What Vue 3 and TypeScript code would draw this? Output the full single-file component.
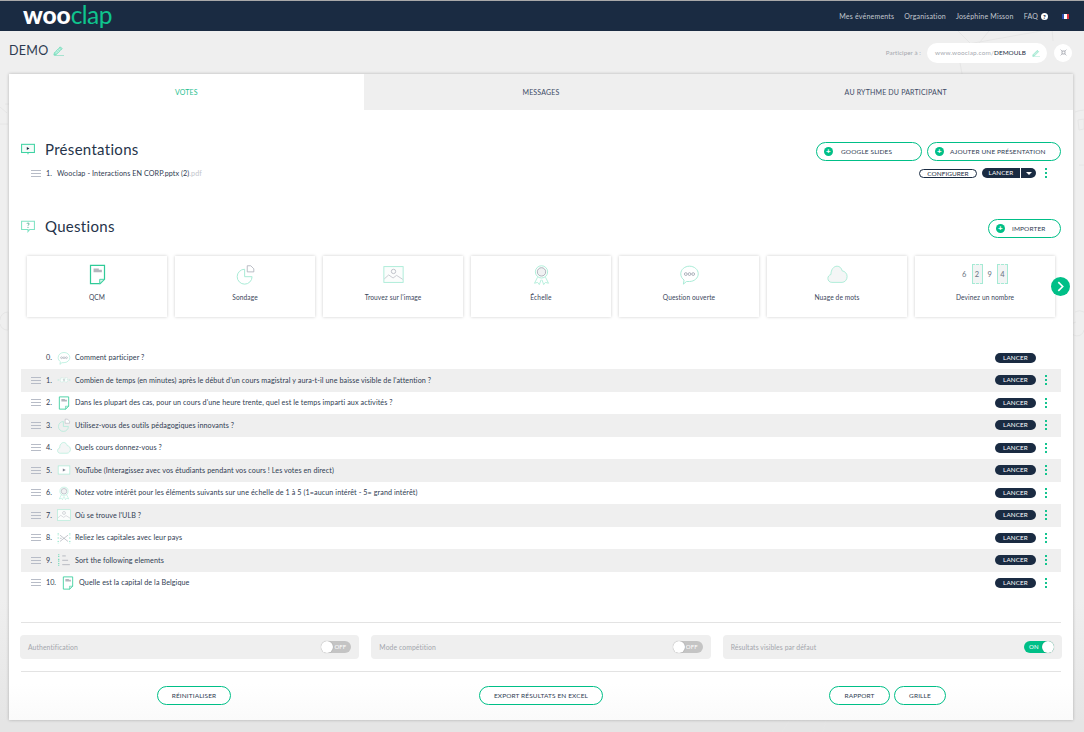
<script setup lang="ts">
interface Q { n: number; icon: string; text: string; drag: boolean }
const types = [
  { icon: 'qcm', label: 'QCM' },
  { icon: 'pie', label: 'Sondage' },
  { icon: 'image', label: 'Trouvez sur l\'image' },
  { icon: 'scale', label: 'Échelle' },
  { icon: 'open', label: 'Question ouverte' },
  { icon: 'cloud', label: 'Nuage de mots' },
]
const questions: Q[] = [
  { n: 0, icon: 'open', text: 'Comment participer ?', drag: false },
  { n: 1, icon: 'dash', text: 'Combien de temps (en minutes) après le début d\'un cours magistral y aura-t-il une baisse visible de l\'attention ?', drag: true },
  { n: 2, icon: 'qcm', text: 'Dans les plupart des cas, pour un cours d\'une heure trente, quel est le temps imparti aux activités ?', drag: true },
  { n: 3, icon: 'pie', text: 'Utilisez-vous des outils pédagogiques innovants ?', drag: true },
  { n: 4, icon: 'cloud', text: 'Quels cours donnez-vous ?', drag: true },
  { n: 5, icon: 'video', text: 'YouTube (Interagissez avec vos étudiants pendant vos cours ! Les votes en direct)', drag: true },
  { n: 6, icon: 'scale', text: 'Notez votre intérêt pour les éléments suivants sur une échelle de 1 à 5 (1=aucun intérêt - 5= grand intérêt)', drag: true },
  { n: 7, icon: 'image', text: 'Où se trouve l\'ULB ?', drag: true },
  { n: 8, icon: 'match', text: 'Reliez les capitales avec leur pays', drag: true },
  { n: 9, icon: 'sort', text: 'Sort the following elements', drag: true },
  { n: 10, icon: 'qcm', text: 'Quelle est la capital de la Belgique', drag: true },
]
const settings = [
  { label: 'Authentification', on: false },
  { label: 'Mode compétition', on: false },
  { label: 'Résultats visibles par défaut', on: true },
]
</script>

<template>
  <div class="page">
    <svg class="sprite" width="0" height="0">
      <symbol id="i-qcm" viewBox="0 0 24 24">
        <path d="M4 1.500h16v16l-5 5H4z" fill="#fff" stroke="#2fcb98" stroke-width="1.400" />
        <path d="M14.500 22.500v-5H20z" fill="#d8f5ea" stroke="#3fcf9f" stroke-width="1" />
        <path d="M7.500 5h6v1.500h3.500v3H7.500z" fill="#b3b6bd" />
      </symbol>
      <symbol id="i-pie" viewBox="0 0 24 24">
        <path d="M11 6a8.500 8.500 0 1 0 8.500 8.500H11z" fill="none" stroke="#a5ead4" stroke-width="1.100" />
        <path d="M14 2h4l3.500 3.500V9H14z" fill="#fff" stroke="#a8acb6" stroke-width="0.900" />
      </symbol>
      <symbol id="i-image" viewBox="0 0 24 24">
        <rect x="1" y="3" width="22" height="18" fill="#fbfdfc" stroke="#a5ead4" stroke-width="1" />
        <circle cx="12" cy="8.500" r="2.500" fill="none" stroke="#a8acb6" stroke-width="0.800" />
        <path d="M1.500 17l5-4.500 5 3.500 4-3 7 4.500" fill="none" stroke="#b5b8c0" stroke-width="0.800" />
      </symbol>
      <symbol id="i-scale" viewBox="0 0 24 24">
        <circle cx="12" cy="9" r="7" fill="none" stroke="#a5ead4" stroke-width="1" />
        <circle cx="12" cy="9" r="4.800" fill="#f0f1f2" stroke="#8f95a1" stroke-width="0.800" />
        <path d="M7.500 15L4 22l3.500-1 2 2.500L11.500 18M16.500 15l3.500 7-3.500-1-2 2.500L12.500 18" fill="none" stroke="#a5ead4" stroke-width="0.900" />
      </symbol>
      <symbol id="i-open" viewBox="0 0 24 24">
        <path d="M12 2.500c5.500 0 10 3.900 10 8.700s-4.500 8.800-10 8.800H8.500L5 23l.8-4.700C3.500 16.800 2 14.300 2 11.200 2 6.400 6.500 2.500 12 2.500z" fill="#fff" stroke="#a5ead4" stroke-width="1.100" />
        <circle cx="7.800" cy="11.500" r="1.600" fill="none" stroke="#7f8694" stroke-width="0.700" />
        <circle cx="12" cy="11.500" r="1.600" fill="none" stroke="#7f8694" stroke-width="0.700" />
        <circle cx="16.200" cy="11.500" r="1.600" fill="none" stroke="#7f8694" stroke-width="0.700" />
      </symbol>
      <symbol id="i-cloud" viewBox="0 0 24 24">
        <path d="M5.500 21C2.900 21 1 19 1 16.500c0-2.300 1.500-4 3.500-4.500C4.500 6.500 7.500 2.500 11.500 2.500c3 0 5.200 2.200 5.800 5.300 3 .4 5.700 3 5.700 6.500 0 3.700-2.600 6.700-5.800 6.700z" fill="#f4f6f6" stroke="#a5ead4" stroke-width="1" />
      </symbol>
      <symbol id="i-video" viewBox="0 0 24 24">
        <rect x="2" y="5" width="20" height="14" fill="#fff" stroke="#a5ead4" stroke-width="1.100" />
        <path d="M10 9.500l5 2.500-5 2.500z" fill="#7f8694" />
      </symbol>
      <symbol id="i-dash" viewBox="0 0 24 24">
        <path d="M1 12h3M20 12h3" stroke="#a5ead4" stroke-width="1.200" fill="none" />
        <rect x="6.500" y="8.500" width="4" height="7" fill="#fff" stroke="#a5ead4" stroke-width="0.900" stroke-dasharray="1.500 1.500" />
        <rect x="13.500" y="8.500" width="4" height="7" fill="#fff" stroke="#a5ead4" stroke-width="0.900" stroke-dasharray="1.500 1.500" />
        <path d="M10.500 12h3" stroke="#9298a5" stroke-width="0.900" />
      </symbol>
      <symbol id="i-match" viewBox="0 0 24 24">
        <path d="M2 4v4M2 11v3M2 17v4M22 4v4M22 11v3M22 17v4" stroke="#5fd8b1" stroke-width="1.400" fill="none" stroke-dasharray="2 1.500" />
        <path d="M5 7l14 11M5 18L19 7M5 12.500h3" stroke="#8f95a1" stroke-width="0.900" fill="none" />
      </symbol>
      <symbol id="i-sort" viewBox="0 0 24 24">
        <path d="M3 2v6M3 10v5M3 17v5" stroke="#5fd8b1" stroke-width="1.800" fill="none" stroke-dasharray="2 1" />
        <path d="M9 5h6M9 12.500h10M9 20h13" stroke="#8f95a1" stroke-width="1" fill="none" />
      </symbol>
      <symbol id="i-present" viewBox="0 0 24 24">
        <rect x="1" y="4" width="22" height="14" fill="#f4fcf9" stroke="#3fd3a3" stroke-width="1.800" />
        <path d="M10 8.500l4.500 2.500-4.500 2.500z" fill="#1a2b42" />
        <path d="M12 18v3" stroke="#3fd3a3" stroke-width="1.800" />
      </symbol>
      <symbol id="i-ask" viewBox="0 0 24 24">
        <path d="M1 4h22v14H15l-3 3.500V18H1z" fill="#fff" stroke="#7fe3c3" stroke-width="1.800" />
        <path d="M10 8c.5-1.500 4-1.500 4 .5 0 1.500-2 1.500-2 3" stroke="#1a8f70" stroke-width="1.200" fill="none" />
        <circle cx="12" cy="14" r=".9" fill="#1a8f70" />
      </symbol>
      <symbol id="i-pencil" viewBox="0 0 24 24">
        <path d="M3 17L16 4l4 4L7 21l-5 1z" fill="#a5ead4" stroke="#5fd8b1" stroke-width="1.500" />
        <path d="M6 14l4 4M9 11l4 4M12 8l4 4" stroke="#fff" stroke-width="1" />
        <path d="M3 23.500h21" stroke="#5fd8b1" stroke-width="1.500" />
      </symbol>
    </svg>

    <svg class="doodles" width="1084" height="732" viewBox="0 0 1084 732" fill="none" stroke="#e6e6e6" stroke-width="1">
      <path d="M958 31l17 17 14-17M962 74l-5-28 95-17 1 12" />
      <path d="M1075 112a26 26 0 0 1 9-2M1078 120l6-1v10l-5 1zM1079 165h5" />
      <path d="M0 107l7 6M0 124h8M5 104h4" />
      <path d="M0 320a8 8 0 0 1 8-8v18a8 8 0 0 1-8-6" />
      <path d="M1075 312a9 9 0 0 1 9 0M1076 322a7 7 0 1 0 8 8" />
      <path d="M765 720c2 6 6 9 9 12M790 720l-8 12M806 720a8 8 0 1 0 14 0M826 720l-3 12" />
    </svg>

    <header class="topbar">
      <div class="logo"><b>woo</b><span>clap</span></div>
      <nav class="nav">
        <a>Mes événements</a>
        <a>Organisation</a>
        <a>Joséphine Misson</a>
        <a class="faq">FAQ <i class="help">?</i></a>
        <span class="flag"><i class="fb"></i><i class="fw"></i><i class="fr"></i></span>
      </nav>
    </header>

    <div class="subbar">
      <h1 class="demo">DEMO</h1>
      <svg class="pencil-demo"><use href="#i-pencil" /></svg>
      <div class="join">
        <span class="join-label">Participer à :</span>
        <div class="join-pill">
          <span class="url">www.wooclap.com/</span><b class="code">DEMOULB</b>
          <svg class="pencil-url"><use href="#i-pencil" /></svg>
        </div>
        <div class="join-round">
          <svg viewBox="0 0 12 12" width="7" height="7" fill="none" stroke="#a9adb5" stroke-width="1.300"><path d="M1 1l3.500 3.500M11 1L7.500 4.500M1 11l3.500-3.500M11 11L7.500 7.500M2 5h3V2M10 5H7V2M2 7h3v3M10 7H7v3" /></svg>
        </div>
      </div>
    </div>

    <main class="card">
      <div class="tabs">
        <div class="tab active">VOTES</div>
        <div class="tab">MESSAGES</div>
        <div class="tab">AU RYTHME DU PARTICIPANT</div>
      </div>

      <section class="head first">
        <svg class="head-icon"><use href="#i-present" /></svg>
        <h2>Présentations</h2>
        <div class="head-actions">
          <button class="outline add slides"><i class="plus">+</i><span>GOOGLE SLIDES</span></button>
          <button class="outline add new"><i class="plus">+</i><span>AJOUTER UNE PRÉSENTATION</span></button>
        </div>
      </section>

      <div class="pres-row">
        <span class="handle"><i></i><i></i><i></i></span>
        <span class="num">1.</span>
        <span class="qtext pres">Wooclap - Interactions EN CORP.pptx (2)<em>.pdf</em></span>
        <button class="configure">CONFIGURER</button>
        <span class="split"><button class="launch left">LANCER</button><button class="launch caret"><i></i></button></span>
        <span class="dots-slot"><span class="dots"><i></i><i></i><i></i></span></span>
      </div>

      <section class="head second">
        <svg class="head-icon"><use href="#i-ask" /></svg>
        <h2>Questions</h2>
        <div class="head-actions">
          <button class="outline add imp"><i class="plus">+</i><span>IMPORTER</span></button>
        </div>
      </section>

      <div class="types">
        <div v-for="t in types" :key="t.label" class="type">
          <svg class="type-icon"><use :href="'#i-' + t.icon" /></svg>
          <span>{{ t.label }}</span>
        </div>
        <div class="type">
          <div class="digits">
            <span>6</span><span class="box">2</span><span>9</span><span class="box">4</span>
          </div>
          <span>Devinez un nombre</span>
        </div>
        <div class="next">
          <svg viewBox="0 0 10 10" width="11" height="11" fill="none" stroke="#fff" stroke-width="1.500"><path d="M3 1l4 4-4 4" /></svg>
        </div>
      </div>

      <div class="list">
        <div v-for="q in questions" :key="q.n" class="row">
          <span class="handle" :class="{ ghost: !q.drag }"><i></i><i></i><i></i></span>
          <span class="num">{{ q.n }}.</span>
          <svg class="row-icon"><use :href="'#i-' + q.icon" /></svg>
          <span class="qtext">{{ q.text }}</span>
          <button class="launch solo">LANCER</button>
          <span class="dots-slot"><span v-if="q.drag" class="dots"><i></i><i></i><i></i></span></span>
        </div>
      </div>

      <hr class="sep sep-a" />
      <div class="settings">
        <div v-for="s in settings" :key="s.label" class="setting">
          <span>{{ s.label }}</span>
          <span class="toggle" :class="{ on: s.on }">
            <i class="knob"></i><em>{{ s.on ? 'ON' : 'OFF' }}</em>
          </span>
        </div>
      </div>
      <hr class="sep sep-b" />

      <div class="footer">
        <button class="outline f1">RÉINITIALISER</button>
        <button class="outline f2">EXPORT RÉSULTATS EN EXCEL</button>
        <button class="outline f3">RAPPORT</button>
        <button class="outline f4">GRILLE</button>
      </div>
    </main>
  </div>
</template>

<style>
html, body { margin: 0; background: #efefef; overflow: hidden; }
</style>

<style scoped>
.page {
  position: relative;
  width: 1084px;
  height: 732px;
  overflow: hidden;
  background: linear-gradient(#efefef 0, #efefef 600px, #e5e5e5 722px);
  font-family: Lato, "Open Sans", sans-serif;
  color: #1a2b42;
}
.sprite { position: absolute; }
.doodles { position: absolute; left: 0; top: 0; }
button { font-family: inherit; padding: 0; cursor: pointer; }

.topbar {
  position: relative;
  height: 30px;
  border-top: 1px solid #a9a9a9;
  background: #1a2b42;
  display: flex;
  align-items: center;
  padding: 0 15px 0 23px;
}
.logo { font-size: 24.500px; line-height: 30px; margin-top: -2px; }
.logo b { color: #fff; font-weight: 900; letter-spacing: -.1px; }
.logo span { color: #0fc48e; font-weight: 400; letter-spacing: -.5px; }
.nav {
  margin-left: auto;
  display: flex;
  align-items: center;
  font-size: 7px;
  letter-spacing: .2px;
  color: #c3c8d0;
}
.nav a { margin-left: 10px; }
.faq { display: flex; align-items: center; gap: 3px; }
.help {
  width: 7px; height: 7px; border-radius: 50%;
  background: #fff; color: #1a2b42;
  font: 900 6px/7px Lato, sans-serif;
  text-align: center;
}
.flag { display: flex; margin-left: 14px; width: 7px; height: 5px; }
.flag i { flex: 1; }
.fb { background: #2a4fb0; } .fw { background: #fff; } .fr { background: #e0303c; }

.subbar {
  position: relative;
  height: 43px;
  display: flex;
  align-items: center;
  padding: 0 12px 4px 9px;
  box-sizing: border-box;
}
.demo { margin: 0; font-size: 12.500px; font-weight: 400; letter-spacing: .3px; color: #2c3a50; }
.pencil-demo { width: 11px; height: 11px; margin-left: 4px; }
.join { margin-left: auto; display: flex; align-items: center; margin-top: 4px; }
.join-label { font-size: 6.200px; color: #a3a6ad; margin-right: 6px; letter-spacing: .1px; }
.join-pill {
  width: 120px; height: 20px; box-sizing: border-box;
  background: #fff; border-radius: 10px;
  display: flex; align-items: center;
  padding: 0 7px 0 8px;
  font-size: 6.400px;
}
.url { color: #a8abb2; letter-spacing: .18px; }
.code { font-weight: 400; color: #1a2b42; letter-spacing: .05px; }
.pencil-url { width: 8px; height: 8px; margin-left: auto; opacity: .8; }
.join-round {
  width: 18px; height: 18px; margin-left: 7px; border-radius: 50%;
  background: #fff; display: flex; align-items: center; justify-content: center;
}

.card {
  position: relative;
  width: 1064px;
  height: 646px;
  margin-left: 9px;
  background: linear-gradient(#fff 0, #fff 610px, #fafafa 646px);
  box-shadow: 0 0 3px rgba(0, 0, 0, .25);
}
.tabs { display: flex; height: 36px; }
.tab {
  flex: 1;
  display: flex; align-items: center; justify-content: center;
  background: #efefef;
  font-size: 7px;
  letter-spacing: .18px;
  color: #3d4b66;
}
.tab.active { background: #fff; color: #1fc08f; }

.head { display: flex; align-items: center; height: 19px; padding: 0 12px; }
.head.first { margin-top: 32px; }
.head.second { margin-top: 38px; }
.head-icon { width: 14px; height: 14px; margin-bottom: 5px; }
.head h2 { margin: 0 0 6px 10px; font-size: 15px; font-weight: 400; letter-spacing: .3px; color: #26344a; }
.head-actions { margin-left: auto; display: flex; gap: 5px; }

.outline {
  height: 19px;
  box-sizing: border-box;
  background: #fff;
  border: 1px solid #00bf87;
  border-radius: 10px;
  color: #2f3c52;
  font-size: 6.500px;
  letter-spacing: .12px;
  display: flex; align-items: center; justify-content: center;
}
.add { justify-content: flex-start; padding-left: 7px; }
.plus {
  width: 9px; height: 9px; border-radius: 50%;
  background: #00bf87; color: #fff;
  font: 900 8px/9px Lato, sans-serif; text-align: center;
  flex: none;
}
.add span { margin-left: 8px; }
.slides { width: 106px; }
.new { width: 134px; }
.new span { margin-left: 6px; }
.imp { width: 73px; }
.imp span { margin-left: 7px; }

.pres-row {
  display: flex; align-items: center;
  height: 16px;
  margin-top: 4px;
  padding: 0 12px 0 22px;
}
.handle { display: flex; flex-direction: column; gap: 2px; width: 10px; margin-right: 5px; flex: none; }
.handle i { display: block; height: 1px; background: #b7bcc7; }
.handle.ghost { visibility: hidden; }
.num { min-width: 6px; margin-right: 5px; font-size: 7.200px; color: #2f3c52; flex: none; }
.qtext { font-size: 7.200px; color: #2f3c52; letter-spacing: .08px; white-space: nowrap; }
.qtext em { color: #c2c5cb; font-style: normal; }
.pres { margin-right: auto; }
.configure {
  width: 58px; height: 9px; box-sizing: border-box;
  background: #fff; border: 1px solid #1a2b42; border-radius: 5px;
  font-size: 6.500px; line-height: 7px; color: #1a2b42; margin-right: 5px;
}
.split { display: flex; gap: 1px; }
.launch {
  border: 0; background: #1a2b42; color: #fff;
  font-size: 6.300px; letter-spacing: .12px;
  height: 10px; line-height: 10px;
}
.left { width: 38px; border-radius: 5px 0 0 5px; }
.caret { width: 15px; border-radius: 0 5px 5px 0; display: flex; align-items: center; justify-content: center; }
.caret i { width: 0; height: 0; border: 3px solid transparent; border-top: 3px solid #fff; border-bottom: 0; }
.solo { width: 41px; border-radius: 5px; margin-left: auto; }
.dots-slot { width: 25px; display: flex; padding-left: 9px; box-sizing: border-box; flex: none; }
.dots { display: flex; flex-direction: column; gap: 2px; }
.dots i { display: block; width: 2px; height: 2px; background: #14c48f; }

.types {
  position: relative;
  display: flex;
  gap: 8px;
  margin-top: 18px;
  padding-left: 18px;
}
.type {
  width: 140px; height: 61px;
  background: #fff;
  box-shadow: 0 0 3px rgba(0, 0, 0, .2);
  display: flex; flex-direction: column; align-items: center;
  font-size: 6.600px;
  color: #3a465a;
  letter-spacing: .1px;
  flex: none;
  box-sizing: border-box;
  padding-top: 8px;
}
.type-icon { width: 21px; height: 21px; margin-bottom: 8px; }
.digits { display: flex; height: 20px; align-items: center; gap: 5px; font-size: 7.500px; color: #6b7381; margin-bottom: 9px; }
.box {
  width: 11px; height: 20px; line-height: 20px; text-align: center;
  background: #f2f4f4; border-left: 1px solid #a5ead4; border-right: 1px solid #a5ead4;
  box-sizing: border-box;
  border-top: 1px dashed #a5ead4; border-bottom: 1px dashed #a5ead4;
}
.next {
  position: absolute;
  left: 1042px; top: 21px;
  width: 19px; height: 19px; border-radius: 50%;
  background: #00bf87;
  display: flex; align-items: center; justify-content: center;
}

.list { margin: 29.500px 12px 0; }
.row {
  height: 22.500px;
  display: flex; align-items: center;
  padding-left: 10px;
}
.row:nth-child(even) { background: #efefef; }
.row-icon { width: 14px; height: 14px; margin-right: 4px; flex: none; }

.sep { border: 0; height: 1px; background: #e3e3e3; margin: 0 12px; }
.sep-a { margin-top: 27.500px; }
.sep-b { margin-top: 12px; }
.settings {
  display: grid;
  grid-template-columns: repeat(3, 1fr);
  gap: 12px;
  margin: 12px 11px 0;
}
.setting {
  height: 24px;
  border-radius: 4px;
  background: #efefef;
  display: flex; align-items: center; justify-content: space-between;
  padding: 0 8px;
  font-size: 6.800px;
  letter-spacing: .1px;
  color: #a3a6ad;
}
.toggle {
  position: relative;
  width: 30px; height: 12px;
  border-radius: 6px;
  background: #c4c4c4;
  color: #fff;
  font-size: 6px;
}
.toggle em { position: absolute; right: 5px; top: 0; line-height: 12px; font-style: normal; }
.knob { position: absolute; left: 0; top: 0; width: 12px; height: 12px; border-radius: 50%; background: #fff; box-shadow: 0 0 1px rgba(0,0,0,.35); }
.toggle.on { background: #00bf87; }
.toggle.on .knob { left: 18px; }
.toggle.on em { right: auto; left: 5px; }

.footer { display: flex; margin-top: 14px; padding-left: 148px; }
.f1 { width: 74px; }
.f2 { width: 124px; margin-left: 248px; }
.f3 { width: 61px; margin-left: 226px; }
.f4 { width: 52px; margin-left: 4px; }
</style>
